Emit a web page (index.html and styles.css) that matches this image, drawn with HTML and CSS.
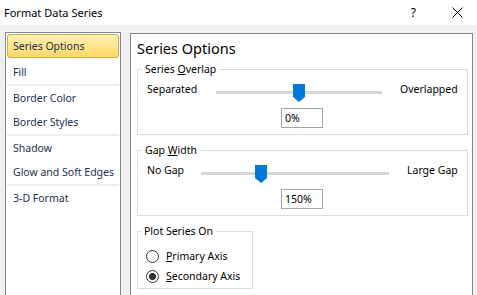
FILE: index.html
```html
<!DOCTYPE html>
<html>

<head>
    <title>Format Data Series</title>
    <meta charset="utf-8">
    <link rel="stylesheet" href="styles.css">
</head>

<body>
    <div class="titlebar">
        <span class="title">Format Data Series</span>
        <span class="help">?</span>
        <svg class="close" width="11" height="11" viewBox="0 0 11 11">
            <path d="M0.5 0.5 L10.5 10.5 M10.5 0.5 L0.5 10.5" stroke="#000" stroke-width="1" fill="none" />
        </svg>
    </div>

    <div class="main">
        <div class="sidebar">
            <div class="item selected">Series Options</div>
            <div class="item">Fill</div>
            <div class="sep"></div>
            <div class="item">Border Color</div>
            <div class="item">Border Styles</div>
            <div class="sep"></div>
            <div class="item">Shadow</div>
            <div class="item">Glow and Soft Edges</div>
            <div class="sep"></div>
            <div class="item">3-D Format</div>
        </div>

        <div class="panel">
            <div class="heading">Series Options</div>

            <fieldset class="group">
                <legend>Series <u>O</u>verlap</legend>
                <div class="slider-row overlap">
                    <span class="label">Separated</span>
                    <div class="track">
                        <svg class="thumb" style="left: 77px" width="12" height="18" viewBox="0 0 12 18">
                            <polygon points="0,0 12,0 12,13 6,18 0,13" fill="#0078d7" />
                        </svg>
                    </div>
                    <span class="label end">Overlapped</span>
                </div>
                <div class="value">0%</div>
            </fieldset>

            <fieldset class="group">
                <legend>Gap <u>W</u>idth</legend>
                <div class="slider-row gap">
                    <span class="label">No Gap</span>
                    <div class="track">
                        <svg class="thumb" style="left: 54px" width="12" height="18" viewBox="0 0 12 18">
                            <polygon points="0,0 12,0 12,13 6,18 0,13" fill="#0078d7" />
                        </svg>
                    </div>
                    <span class="label end">Large Gap</span>
                </div>
                <div class="value">150%</div>
            </fieldset>

            <fieldset class="group plot">
                <legend>Plot Series On</legend>
                <div class="radios">
                    <div class="radio-row"><span class="radio"></span><span><u>P</u>rimary Axis</span></div>
                    <div class="radio-row"><span class="radio checked"></span><span><u>S</u>econdary Axis</span></div>
                </div>
            </fieldset>
        </div>
    </div>
</body>

</html>
```
FILE: styles.css
```css
body {
    margin: 0;
    width: 477px;
    height: 295px;
    overflow: hidden;
    background-color: #f0f0f0;
    font-family: "Noto Sans", "Open Sans", sans-serif;
    font-size: 10.5px;
    color: #000;
}

.titlebar {
    height: 25px;
    background-color: #fff;
    display: flex;
    align-items: center;
    padding-left: 4px;
}

.title {
    font-size: 11px;
}

.help {
    margin-left: auto;
    font-size: 12px;
    margin-right: 36px;
}

.close {
    margin-right: 14px;
}

.main {
    display: flex;
    gap: 9px;
    padding: 7px 0 0 5px;
    height: 270px;
    overflow: hidden;
}

.sidebar {
    width: 114px;
    height: 280px;
    border: 1px solid #828790;
    background-color: #fff;
    padding-top: 1px;
    box-sizing: content-box;
}

.item {
    height: 24px;
    line-height: 24px;
    padding-left: 6px;
    margin: 0 1px;
    color: #1e2f4f;
    white-space: nowrap;
}

.item.selected {
    margin: 0 1px 2px 1px;
    height: 22px;
    line-height: 22px;
    padding-left: 5px;
    border: 1px solid #d4a84a;
    border-radius: 3px;
    background: linear-gradient(#fff0b5, #ffd865);
}

.sep {
    height: 2px;
    margin: 0 1px;
    background-color: #eeeeee;
}

.panel {
    width: 343px;
    height: 280px;
    margin-top: 1px;
    border: 1px solid #828790;
    background-color: #fff;
    padding-left: 6px;
    box-sizing: border-box;
}

.heading {
    font-size: 14.5px;
    line-height: 20px;
    padding-top: 4px;
}

.group {
    margin: 3px 4px 0 0;
    padding: 0 0 6px 9px;
    border: 1px solid #dcdcdc;
    min-width: 0;
}

.group + .group {
    margin-top: 7px;
}

.group legend {
    padding: 0 3px;
    line-height: 16px;
    margin-left: -5px;
}

.slider-row {
    display: grid;
    margin-top: 3px;
    height: 22px;
}

.slider-row.overlap {
    grid-template-columns: 69px 166px auto;
}

.slider-row.gap {
    grid-template-columns: 54px 188px auto;
}

.label {
    line-height: 18px;
    white-space: nowrap;
}

.label.end {
    padding-left: 18px;
}

.track {
    position: relative;
    height: 22px;
}

.track::before {
    content: "";
    position: absolute;
    left: 0;
    right: 0;
    top: 11px;
    height: 3px;
    background-color: #d6d6d6;
}

.thumb {
    position: absolute;
    top: 4px;
}

.value {
    margin: 6px 0 0 134px;
    height: 18px;
    line-height: 18px;
    border: 1px solid #a5a5a5;
    padding-left: 3px;
    box-sizing: content-box;
    width: 37px;
}

.group.plot {
    width: 116px;
    box-sizing: border-box;
    padding: 0 0 2px 8px;
}

.radios {
    padding-top: 7px;
}

.radio-row {
    display: flex;
    align-items: center;
    gap: 7px;
    height: 20px;
}

.radio {
    width: 13px;
    height: 13px;
    border: 1px solid #333;
    border-radius: 50%;
    box-sizing: border-box;
    background-color: #fff;
}

.radio.checked {
    background: radial-gradient(circle, #333 0 3.3px, #fff 3.8px);
}
```
